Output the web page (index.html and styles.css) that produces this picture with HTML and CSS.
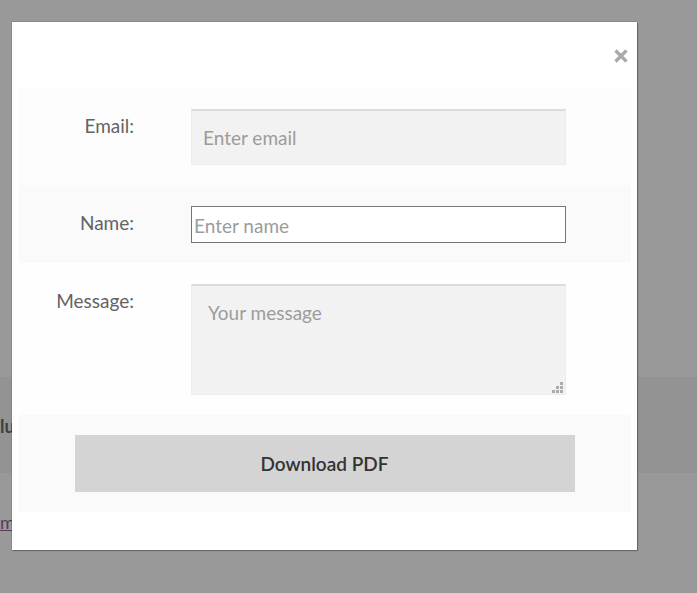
FILE: index.html
```html
<!DOCTYPE html>
<html lang="en">
<head>
<meta charset="utf-8">
<title>Download PDF</title>
<link rel="stylesheet" href="styles.css">
</head>
<body>
<div class="page">
  <div class="page-top"></div>
  <div class="band"><span class="band-text">lude more details here</span></div>
  <p class="page-link"><a href="#">more information</a></p>
</div>
<div class="overlay"></div>
<div class="modal">
  <div class="modal-head">
    <button class="close" aria-label="Close">
      <svg width="14" height="14" viewBox="0 0 14 14"><path d="M1.5 1.5 L12.5 12.5 M12.5 1.5 L1.5 12.5" stroke="#a9a9a9" stroke-width="3.2" stroke-linecap="butt"/></svg>
    </button>
  </div>
  <form class="form">
    <div class="row row-a">
      <label class="label" for="email">Email:</label>
      <input id="email" class="field field-soft" type="text" placeholder="Enter email">
    </div>
    <div class="row row-b">
      <label class="label" for="name">Name:</label>
      <input id="name" class="field field-plain" type="text" placeholder="Enter name">
    </div>
    <div class="row row-c">
      <label class="label" for="msg">Message:</label>
      <div class="area-wrap">
        <textarea id="msg" class="area" placeholder="Your message"></textarea>
        <span class="grip">
          <i class="g g1"></i><i class="g g2"></i><i class="g g3"></i>
          <i class="g g4"></i><i class="g g5"></i><i class="g g6"></i>
        </span>
      </div>
    </div>
    <div class="row row-btn">
      <button type="button" class="submit">Download PDF</button>
    </div>
  </form>
</div>
</body>
</html>
```

FILE: styles.css
```css
html, body {
  margin: 0;
  padding: 0;
}
body {
  background: #ffffff;
  font-family: "Lato", "Liberation Sans", sans-serif;
  width: 697px;
  height: 593px;
  overflow: hidden;
  position: relative;
}
.page-top {
  height: 377px;
  background: #ffffff;
}
.band {
  height: 96px;
  background: #f5f5f5;
  display: flex;
  align-items: center;
}
.band-text {
  font-size: 18px;
  color: #6a6a6a;
  font-weight: 700;
  padding-top: 2px;
}
.page-link {
  margin: 0;
  padding-top: 38px;
  font-size: 18px;
}
.page-link a {
  color: #9b5e9b;
}
.overlay {
  position: fixed;
  inset: 0;
  background: rgba(0, 0, 0, 0.4);
}
.modal {
  position: absolute;
  left: 12px;
  top: 22px;
  width: 625px;
  height: 528px;
  background: #ffffff;
  box-shadow: 0 0 1px rgba(0, 0, 0, 0.6), 1px 1px 1px rgba(0, 0, 0, 0.25);
  box-sizing: border-box;
  padding: 0 6px;
}
.modal-head {
  height: 66px;
  display: flex;
  justify-content: flex-end;
  align-items: flex-start;
  padding-top: 27px;
  padding-right: 3px;
  box-sizing: border-box;
}
.close {
  border: 0;
  background: none;
  padding: 0;
  width: 14px;
  height: 14px;
  cursor: pointer;
}
.close svg {
  display: block;
}
.form {
  width: 613px;
}
.row {
  display: grid;
  grid-template-columns: 173px 375px;
  align-items: start;
  padding: 21px 0 20px;
}
.row-a { background: #fdfdfd; }
.row-b { background: #fafafa; }
.row-c { background: #fefefe; }
.row-btn {
  background: #fafafa;
  display: flex;
  justify-content: center;
  padding: 20px 0 20px;
}
.label {
  text-align: right;
  padding-right: 57px;
  font-size: 19px;
  color: #636363;
  line-height: 24px;
  padding-top: 5px;
}
.field {
  box-sizing: border-box;
  width: 375px;
  margin: 0;
  font-family: inherit;
  font-size: 19px;
  color: #333;
  outline: none;
}
.field::placeholder,
.area::placeholder {
  color: #9c9c9c;
}
.field-soft {
  height: 56px;
  background: #f2f2f2;
  border: 1px solid #ededed;
  border-top: 2px solid #dcdcdc;
  padding: 0 11px;
}
.field-plain {
  height: 37px;
  background: #ffffff;
  border: 1px solid #767676;
  padding: 1px 2px 0;
}
.area-wrap {
  position: relative;
  width: 375px;
  height: 111px;
}
.area {
  display: block;
  box-sizing: border-box;
  width: 375px;
  height: 111px;
  margin: 0;
  resize: none;
  background: #f2f2f2;
  border: 1px solid #ededed;
  border-top: 2px solid #dcdcdc;
  padding: 15px 16px;
  font-family: inherit;
  font-size: 19px;
  line-height: 24px;
  outline: none;
}
.grip {
  position: absolute;
  right: 3px;
  bottom: 2px;
  width: 11px;
  height: 11px;
}
.g {
  position: absolute;
  width: 3px;
  height: 3px;
  background: #ababab;
}
.g1 { left: 8px; top: 0; }
.g2 { left: 4px; top: 4px; }
.g3 { left: 8px; top: 4px; }
.g4 { left: 0; top: 8px; }
.g5 { left: 4px; top: 8px; }
.g6 { left: 8px; top: 8px; }
.submit {
  width: 500px;
  height: 57px;
  border: 0;
  background: #d4d4d4;
  font-family: inherit;
  font-size: 19px;
  font-weight: 600;
  color: #333333;
  cursor: pointer;
}
```
